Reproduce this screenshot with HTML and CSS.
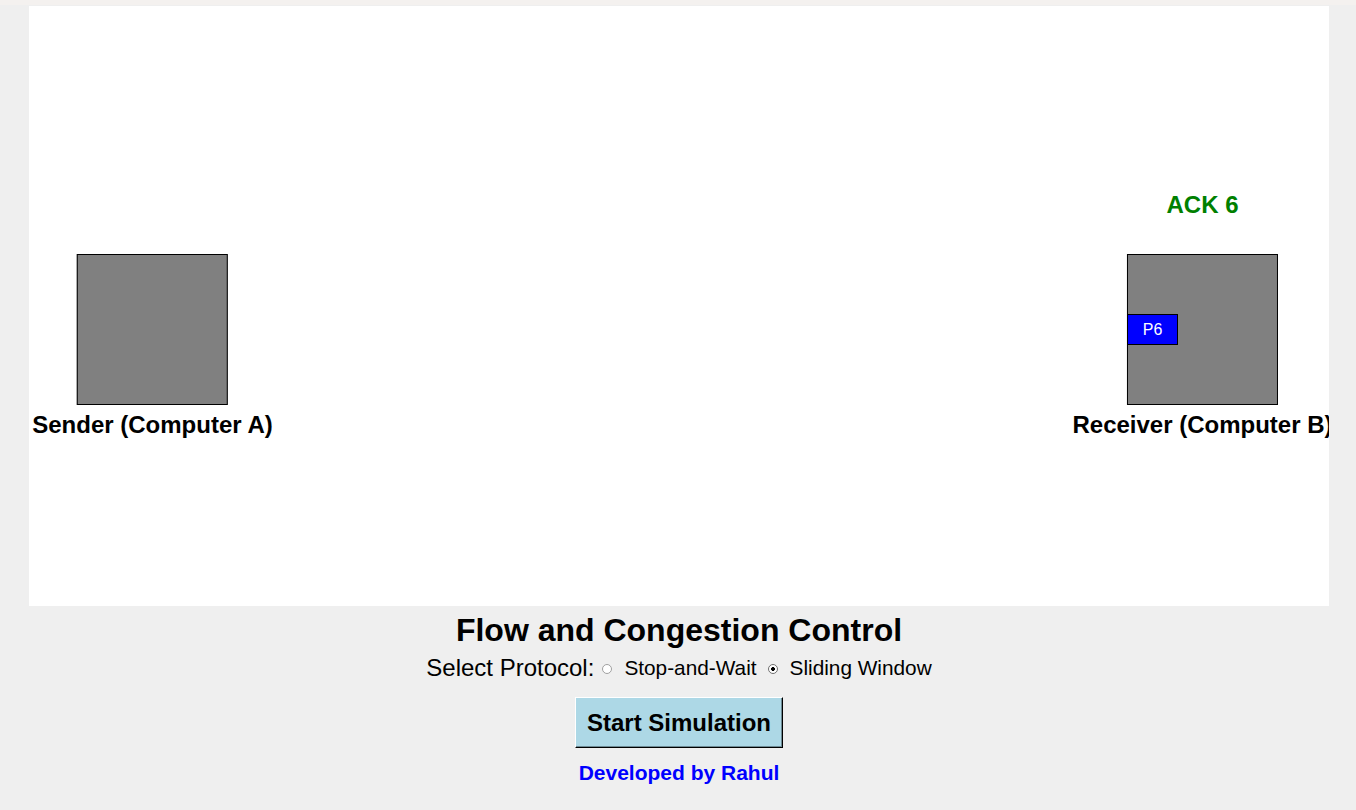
FILE: index.html
```html
<!DOCTYPE html>
<html lang="en">
<head>
<meta charset="utf-8">
<title>Flow and Congestion Control</title>
<link rel="stylesheet" href="styles.css">
</head>
<body>
<main class="page">
  <div class="stage">
    <div class="node node-sender">
      <div class="computer"></div>
      <div class="node-label">Sender (Computer A)</div>
    </div>
    <div class="ack">ACK 6</div>
    <div class="node node-receiver">
      <div class="computer"></div>
      <div class="node-label">Receiver (Computer B)</div>
    </div>
    <div class="packet">P6</div>
  </div>
  <section class="controls">
    <h1 class="title">Flow and Congestion Control</h1>
    <div class="protocol-row">
      <span class="protocol-label">Select Protocol:</span>
      <label class="option"><input type="radio" name="protocol" class="radio"><span>Stop-and-Wait</span></label>
      <label class="option"><input type="radio" name="protocol" class="radio" checked><span>Sliding Window</span></label>
    </div>
    <button class="start-btn" type="button">Start Simulation</button>
    <p class="credit">Developed by Rahul</p>
  </section>
</main>
</body>
</html>
```

FILE: styles.css
```css
html, body {
  margin: 0;
  padding: 0;
}
body {
  background: linear-gradient(#f4f1ef 0, #f4f1ef 5px, #efefef 5px) no-repeat, #efefef;
  font-family: "Liberation Sans", Arial, sans-serif;
  color: #000;
  width: 1356px;
  height: 810px;
  overflow: hidden;
}
.page {
  display: flex;
  flex-direction: column;
  align-items: center;
  padding-top: 6px;
  padding-left: 2px;
}
.stage {
  position: relative;
  width: 1300px;
  height: 600px;
  background: #fff;
  overflow: hidden;
}
.node {
  position: absolute;
  top: 248px;
  display: flex;
  flex-direction: column;
  align-items: center;
  transform: translateX(-50%);
}
.node-sender { left: 123.5px; }
.node-receiver { left: 1173.5px; }
.computer {
  width: 149px;
  height: 149px;
  background: #808080;
  border: 1px solid #000;
}
.node-label {
  margin-top: 6px;
  font-size: 24px;
  line-height: 28px;
  font-weight: bold;
  white-space: nowrap;
}
.ack {
  position: absolute;
  top: 185px;
  left: 1173.5px;
  transform: translateX(-50%);
  font-size: 24px;
  line-height: 28px;
  font-weight: bold;
  color: #008000;
  white-space: nowrap;
}
.packet {
  position: absolute;
  left: 1098px;
  top: 308px;
  width: 49px;
  height: 29px;
  background: #0000ff;
  border: 1px solid #000;
  color: #fff;
  font-size: 16px;
  display: flex;
  align-items: center;
  justify-content: center;
}
.controls {
  display: flex;
  flex-direction: column;
  align-items: center;
}
.title {
  margin: 6px 0 0;
  font-size: 32px;
  line-height: 37px;
  font-weight: bold;
}
.protocol-row {
  margin-top: 5px;
  display: flex;
  align-items: center;
  height: 28px;
}
.protocol-label {
  font-size: 24px;
  line-height: 28px;
}
.option {
  display: flex;
  align-items: center;
  font-size: 20.8px;
  line-height: 28px;
}
.radio {
  appearance: none;
  -webkit-appearance: none;
  width: 10px;
  height: 10px;
  margin: 1px 12px 0 8px;
  border: 1px solid #a0a0a0;
  border-radius: 50%;
  background: #fff;
  box-sizing: border-box;
}
.radio:checked {
  border-color: #707070;
  background: radial-gradient(circle, #000 0, #000 1.6px, #fff 2.2px);
}
.option + .option .radio {
  margin-left: 11px;
}
.start-btn {
  margin-top: 15px;
  width: 208px;
  height: 51px;
  padding: 0;
  background: #add8e6;
  border-top: 1px solid #fff;
  border-left: 1px solid #fff;
  border-right: 1px solid #000;
  border-bottom: 1px solid #000;
  box-shadow: inset -1px -1px 0 #6d8a94;
  font-family: "Liberation Sans", Arial, sans-serif;
  font-size: 24px;
  font-weight: bold;
  color: #000;
}
.credit {
  margin: 13px 0 0;
  font-size: 21px;
  line-height: 24px;
  font-weight: bold;
  color: #0000ff;
}
```
